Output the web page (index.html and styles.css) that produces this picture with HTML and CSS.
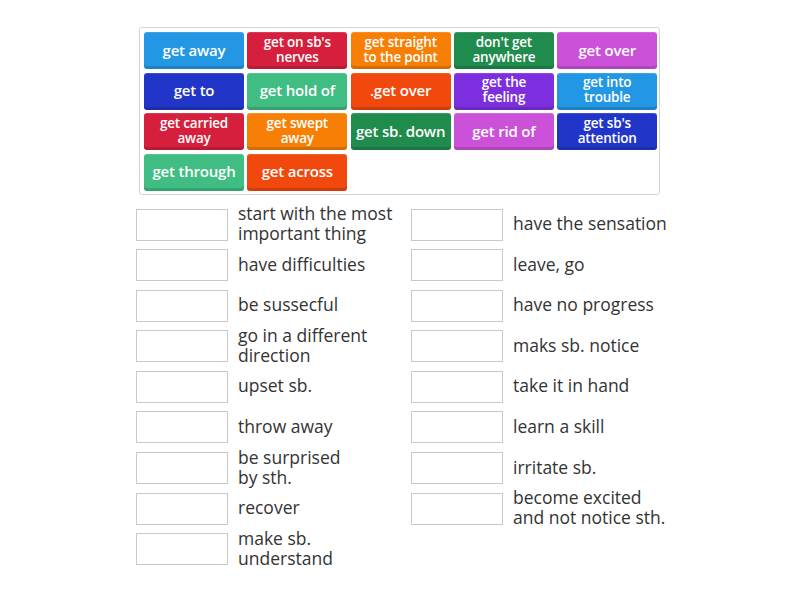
FILE: index.html
```html
<!DOCTYPE html>
<html>
<head>
<meta charset="utf-8">
<link rel="stylesheet" href="styles.css">
</head>
<body>
<div class="page">
  <div class="bank">
    <div class="tile c-blue">get away</div>
    <div class="tile c-red two">get on sb's<br>nerves</div>
    <div class="tile c-orange two">get straight<br>to the point</div>
    <div class="tile c-dgreen two">don't get<br>anywhere</div>
    <div class="tile c-magenta">get over</div>
    <div class="tile c-navy">get to</div>
    <div class="tile c-green">get hold of</div>
    <div class="tile c-tomato">.get over</div>
    <div class="tile c-violet two">get the<br>feeling</div>
    <div class="tile c-blue two">get into<br>trouble</div>
    <div class="tile c-red two">get carried<br>away</div>
    <div class="tile c-orange two">get swept<br>away</div>
    <div class="tile c-dgreen">get sb. down</div>
    <div class="tile c-magenta">get rid of</div>
    <div class="tile c-navy two">get sb's<br>attention</div>
    <div class="tile c-green">get through</div>
    <div class="tile c-tomato">get across</div>
  </div>
  <div class="targets">
    <div class="col">
      <div class="item"><div class="slot"></div><div class="label">start with the most<br>important thing</div></div>
      <div class="item"><div class="slot"></div><div class="label">have difficulties</div></div>
      <div class="item"><div class="slot"></div><div class="label">be sussecful</div></div>
      <div class="item"><div class="slot"></div><div class="label">go in a different<br>direction</div></div>
      <div class="item"><div class="slot"></div><div class="label">upset sb.</div></div>
      <div class="item"><div class="slot"></div><div class="label">throw away</div></div>
      <div class="item"><div class="slot"></div><div class="label">be surprised<br>by sth.</div></div>
      <div class="item"><div class="slot"></div><div class="label">recover</div></div>
      <div class="item"><div class="slot"></div><div class="label">make sb.<br>understand</div></div>
    </div>
    <div class="col">
      <div class="item"><div class="slot"></div><div class="label">have the sensation</div></div>
      <div class="item"><div class="slot"></div><div class="label">leave, go</div></div>
      <div class="item"><div class="slot"></div><div class="label">have no progress</div></div>
      <div class="item"><div class="slot"></div><div class="label">maks sb. notice</div></div>
      <div class="item"><div class="slot"></div><div class="label">take it in hand</div></div>
      <div class="item"><div class="slot"></div><div class="label">learn a skill</div></div>
      <div class="item"><div class="slot"></div><div class="label">irritate sb.</div></div>
      <div class="item"><div class="slot"></div><div class="label">become excited<br>and not notice sth.</div></div>
    </div>
  </div>
</div>
</body>
</html>
```
FILE: styles.css
```css
html, body {
  margin: 0;
  padding: 0;
  background: #ffffff;
}
.page {
  width: 800px;
  height: 600px;
  padding-top: 27px;
  box-sizing: border-box;
  font-family: "Open Sans", "Lato", sans-serif;
}
.bank {
  width: 521px;
  box-sizing: border-box;
  margin-left: 139px;
  border: 1px solid #d4d4d4;
  border-radius: 3px;
  padding: 4px 2px 3px 4px;
  display: grid;
  grid-template-columns: repeat(5, 100px);
  grid-auto-rows: 37px;
  column-gap: 3.3px;
  row-gap: 3.5px;
}
.tile {
  border-radius: 3px;
  color: #ffffff;
  font-weight: 600;
  font-size: 15px;
  line-height: 16px;
  letter-spacing: -0.2px;
  display: flex;
  align-items: center;
  justify-content: center;
  text-align: center;
  box-shadow: inset 0 -3px 0 rgba(0, 0, 0, 0.14), inset 0 1px 0 rgba(255, 255, 255, 0.12);
  padding: 0 2px 2px;
  box-sizing: border-box;
}
.tile.two {
  font-size: 13.5px;
  line-height: 15px;
}
.c-blue { background: #2397e3; }
.c-red { background: #d51f3c; }
.c-orange { background: #f77f06; }
.c-dgreen { background: #1f8b4d; }
.c-magenta { background: #cb52d8; }
.c-navy { background: #2136c8; }
.c-green { background: #3fbd83; }
.c-tomato { background: #f1480e; }
.c-violet { background: #7d2fe0; }

.targets {
  display: flex;
  margin-left: 136px;
  margin-top: 14px;
}
.col {
  width: 275px;
  display: flex;
  flex-direction: column;
  gap: 8.6px;
}
.item {
  height: 32px;
  display: flex;
  align-items: center;
  gap: 10px;
}
.slot {
  width: 92px;
  height: 32px;
  box-sizing: border-box;
  border: 1px solid #c9c9c9;
  background: #ffffff;
  flex: none;
}
.label {
  font-size: 17.5px;
  line-height: 20px;
  color: #333333;
  margin-top: -3px;
  white-space: nowrap;
}
```
